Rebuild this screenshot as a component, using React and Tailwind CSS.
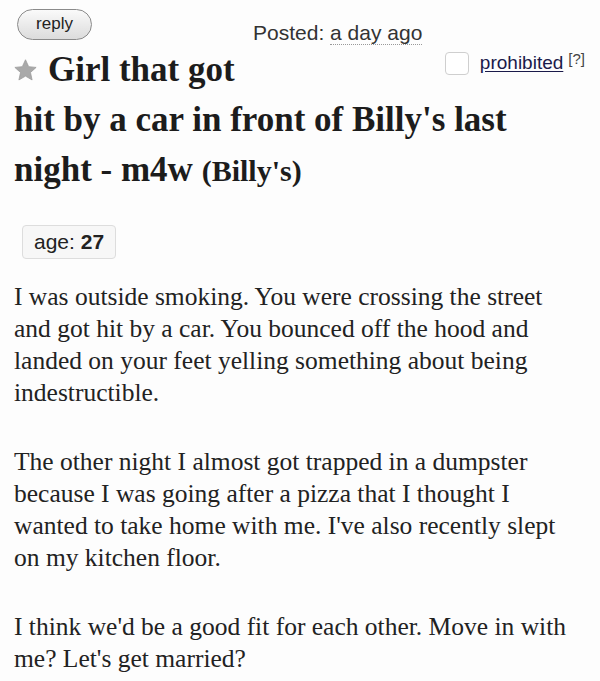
import React from 'react';

const serif = { fontFamily: '"Liberation Serif", "Times New Roman", serif' };
const sans = { fontFamily: '"Liberation Sans", Arial, sans-serif' };

const Star = () => (
  <svg width="23" height="22" viewBox="0 0 24 23" className="shrink-0">
    <path
      d="M12 0.8l3.3 7.2 7.8.8-5.9 5.3 1.7 7.8L12 17.9l-6.9 4 1.7-7.8L.9 8.8l7.8-.8z"
      fill="#a9a9a9"
      stroke="#9a9a9a"
      strokeWidth="0.8"
    />
  </svg>
);

// lines kept as in the posting
const paragraphs = [
  [
    'I was outside smoking. You were crossing the street',
    'and got hit by a car. You bounced off the hood and',
    'landed on your feet yelling something about being',
    'indestructible.',
  ],
  [
    'The other night I almost got trapped in a dumpster',
    'because I was going after a pizza that I thought I',
    "wanted to take home with me. I've also recently slept",
    'on my kitchen floor.',
  ],
  ["I think we'd be a good fit for each other. Move in with", "me? Let's get married?"],
];

export default function App() {
  return (
    <div className="w-[600px] h-[681px] overflow-hidden bg-[#fdfdfd] text-[#1c1c1c]">
      <div className="px-[14px]">
        {/* top row */}
        <div className="flex items-end pt-[9px]" style={sans}>
          <button className="ml-[3px] w-[75px] h-[31px] rounded-full border border-[#8a8a8a] bg-gradient-to-b from-[#fafafa] to-[#dcdcdc] text-[17px] text-[#222] leading-none pb-[3px]">
            reply
          </button>
          <div className="ml-[161px] text-[21px] text-[#333] leading-none -mb-[3px]">
            Posted:{' '}
            <span className="border-b border-dotted border-[#999]">a day ago</span>
          </div>
        </div>

        {/* title */}
        <div className="flex items-start justify-between mt-[10px]">
          <h2 className="flex items-center gap-[11px] text-[35px] font-bold leading-[40px]" style={serif}>
            <Star />
            <span>Girl that got</span>
          </h2>
          <div className="flex items-center -mt-[1px] mr-[1px]" style={sans}>
            <span className="w-[24px] h-[23px] rounded-[4px] border border-[#cfcfcf] bg-white" />
            <a className="ml-[11px] text-[19px] text-[#1a1a4a] underline underline-offset-2">prohibited</a>
            <span className="ml-[5px] text-[15px] text-[#444] -mt-[8px]">[?]</span>
          </div>
        </div>
        <div className="text-[35px] font-bold leading-[50px] mt-[5px]" style={serif}>
          hit by a car in front of Billy's last
          <br />
          night - m4w <span className="text-[30px]">(Billy's)</span>
        </div>

        {/* attributes */}
        <div className="mt-[29px] ml-[8px] inline-flex items-center h-[34px] px-[11px] rounded-[4px] border border-[#dddddd] bg-[#f7f7f7] text-[21px] text-[#222]" style={sans}>
          age:&nbsp;<b>27</b>
        </div>

        {/* body */}
        <div className="mt-[22px] text-[25.5px] leading-[32px] text-[#222] whitespace-nowrap" style={serif}>
          {paragraphs.map((lines, i) => (
            <p key={i} className={i > 0 ? 'mt-[37px]' : ''}>
              {lines.map((line, j) => (
                <React.Fragment key={j}>
                  {line}
                  {j < lines.length - 1 && <br />}
                </React.Fragment>
              ))}
            </p>
          ))}
        </div>
      </div>
    </div>
  );
}
